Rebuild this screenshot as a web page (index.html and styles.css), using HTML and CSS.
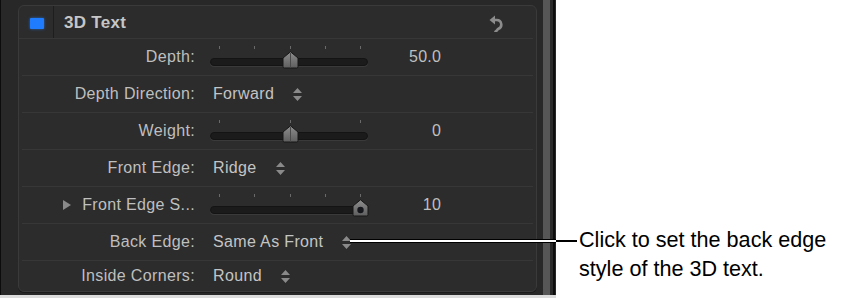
FILE: index.html
```html
<!DOCTYPE html>
<html>
<head>
<meta charset="utf-8">
<link rel="stylesheet" href="styles.css">
</head>
<body>
<div class="page">
  <div class="app">
    <div class="gutter"></div>
    <div class="panel">
      <div class="header">
        <div class="swatch-cell"><span class="swatch"></span></div>
        <div class="title">3D Text</div>
        <svg class="reset" width="14" height="17" viewBox="0 0 14 17">
          <path d="M0.5 5 L6 0.5 L6 9.5 Z" fill="#8c8c8c"/>
          <path d="M5 5 H7.5 A4.6 4.6 0 0 1 9 14 Q8 15.6 6.5 16.5" fill="none" stroke="#8c8c8c" stroke-width="2.6" stroke-linecap="round"/>
        </svg>
      </div>

      <div class="row">
        <div class="label">Depth:</div>
        <div class="slider">
          <div class="ticks"><i></i><i></i><i></i><i></i><i></i></div>
          <div class="track"></div>
          <svg class="thumb" style="left:72px" width="17" height="18" viewBox="0 0 17 18"><defs><linearGradient id="g1" x1="0" y1="0" x2="0" y2="1"><stop offset="0" stop-color="#8e8e8e"/><stop offset="1" stop-color="#5e5e5e"/></linearGradient></defs><path d="M8.5 0.8 L16 7 V15.5 Q16 17 14.5 17 H2.5 Q1 17 1 15.5 V7 Z" fill="url(#g1)" stroke="#161616" stroke-width="1"/><line x1="8.5" y1="2" x2="8.5" y2="16.5" stroke="#4a4a4a" stroke-width="1"/></svg>
        </div>
        <div class="value">50.0</div>
      </div>

      <div class="row">
        <div class="label">Depth Direction:</div>
        <div class="popup"><span>Forward</span><svg class="stepper" width="9" height="13" viewBox="0 0 9 13"><path d="M4.5 0 L9 5 H0 Z M0 8 H9 L4.5 13 Z" fill="#8a8a8a"/></svg></div>
      </div>

      <div class="row">
        <div class="label">Weight:</div>
        <div class="slider">
          <div class="ticks three"><i></i><i></i><i></i></div>
          <div class="track"></div>
          <svg class="thumb" style="left:72px" width="17" height="18" viewBox="0 0 17 18"><defs><linearGradient id="g2" x1="0" y1="0" x2="0" y2="1"><stop offset="0" stop-color="#8e8e8e"/><stop offset="1" stop-color="#5e5e5e"/></linearGradient></defs><path d="M8.5 0.8 L16 7 V15.5 Q16 17 14.5 17 H2.5 Q1 17 1 15.5 V7 Z" fill="url(#g2)" stroke="#161616" stroke-width="1"/><line x1="8.5" y1="2" x2="8.5" y2="16.5" stroke="#4a4a4a" stroke-width="1"/></svg>
        </div>
        <div class="value">0</div>
      </div>

      <div class="row">
        <div class="label">Front Edge:</div>
        <div class="popup"><span>Ridge</span><svg class="stepper" width="9" height="13" viewBox="0 0 9 13"><path d="M4.5 0 L9 5 H0 Z M0 8 H9 L4.5 13 Z" fill="#8a8a8a"/></svg></div>
      </div>

      <div class="row">
        <div class="label"><span class="disclosure"></span>Front Edge S...</div>
        <div class="slider">
          <div class="ticks"><i></i><i></i><i></i><i></i><i></i></div>
          <div class="track"></div>
          <svg class="thumb" style="left:142px" width="17" height="18" viewBox="0 0 17 18"><defs><linearGradient id="g3" x1="0" y1="0" x2="0" y2="1"><stop offset="0" stop-color="#8e8e8e"/><stop offset="1" stop-color="#5e5e5e"/></linearGradient></defs><path d="M8.5 0.8 L16 7 V15.5 Q16 17 14.5 17 H2.5 Q1 17 1 15.5 V7 Z" fill="url(#g3)" stroke="#161616" stroke-width="1"/><circle cx="8.5" cy="11" r="3.2" fill="#15171c"/></svg>
        </div>
        <div class="value">10</div>
      </div>

      <div class="row">
        <div class="label">Back Edge:</div>
        <div class="popup"><span>Same As Front</span><svg class="stepper" width="9" height="13" viewBox="0 0 9 13"><path d="M4.5 0 L9 5 H0 Z M0 8 H9 L4.5 13 Z" fill="#8a8a8a"/></svg></div>
      </div>

      <div class="row last">
        <div class="label">Inside Corners:</div>
        <div class="popup"><span>Round</span><svg class="stepper" width="9" height="13" viewBox="0 0 9 13"><path d="M4.5 0 L9 5 H0 Z M0 8 H9 L4.5 13 Z" fill="#8a8a8a"/></svg></div>
      </div>
    </div>
    <div class="edge">
      <div class="edge-gap"></div>
      <div class="edge-stripe"></div>
      <div class="edge-dark"></div>
      <div class="edge-black"></div>
    </div>
  </div>
  <div class="canvas"></div>
  <div class="callout-line"></div>
  <div class="callout-line-tail"></div>
  <div class="callout-text">Click to set the back edge<br>style of the 3D text.</div>
</div>
</body>
</html>
```

FILE: styles.css
```css
* { box-sizing: border-box; }
html, body { margin: 0; padding: 0; }
body {
  width: 842px;
  height: 298px;
  overflow: hidden;
  background: #ffffff;
  font-family: "Liberation Sans", Arial, sans-serif;
}
.page {
  position: relative;
  display: flex;
  width: 842px;
  height: 298px;
}
.app {
  display: flex;
  width: 556px;
  height: 295px;
  background: #282828;
  border-left: 1px solid #0c0c0c;
}
.gutter { width: 17px; flex: none; }
.panel {
  width: 519px;
  height: 287px;
  margin-top: 5px;
  flex: none;
  background: #2c2c2c;
  border: 1px solid #3a3a3a;
  border-radius: 6px;
  display: flex;
  flex-direction: column;
  box-shadow: 0 1px 0 #1b1b1b;
}
.header {
  height: 33px;
  flex: none;
  margin: 0 3px 0 0;
  display: flex;
  align-items: center;
  border-bottom: 1px solid #373737;
}
.swatch-cell {
  width: 35px;
  height: 100%;
  border-right: 1px solid #1e1e1e;
  display: flex;
  align-items: center;
  justify-content: center;
  padding-top: 2px;
}
.swatch {
  display: block;
  width: 14px;
  height: 11px;
  background: #1f7cff;
  border-radius: 1px;
  box-shadow: 0 0 3px rgba(40, 130, 255, 0.7);
  margin-left: 1px;
}
.title {
  margin-left: 10px;
  padding-top: 1px;
  font-size: 17px;
  font-weight: bold;
  color: #c6c6c6;
  letter-spacing: 0.3px;
  flex: 1;
}
.reset { margin-right: 30px; margin-top: 2px; }
.row {
  height: 37px;
  flex: none;
  margin: 0 3px;
  border-bottom: 1px solid #373737;
  display: flex;
  align-items: center;
}
.row.last { border-bottom: none; flex: 1; }
.label {
  width: 173px;
  flex: none;
  text-align: right;
  font-size: 16px;
  letter-spacing: 0.35px;
  color: #bfbfbf;
  display: flex;
  align-items: center;
  justify-content: flex-end;
}
.disclosure {
  width: 0;
  height: 0;
  border-top: 5px solid transparent;
  border-bottom: 5px solid transparent;
  border-left: 8px solid #8a8a8a;
  margin-right: 11px;
}
.popup {
  margin-left: 18px;
  display: flex;
  align-items: center;
  font-size: 16px;
  letter-spacing: 0.35px;
  color: #c4c4c4;
}
.stepper { margin-left: 19px; }
.slider {
  position: relative;
  margin-left: 15px;
  width: 158px;
  height: 37px;
  flex: none;
}
.ticks {
  position: absolute;
  left: 9px;
  right: 7px;
  top: 7px;
  height: 3px;
  display: flex;
  justify-content: space-between;
}
.ticks i {
  display: block;
  width: 1px;
  height: 3px;
  background: #6a6a6a;
}
.track {
  position: absolute;
  left: 0;
  right: 0;
  top: 19px;
  height: 8px;
  border-radius: 4px;
  background: #1b1b1b;
  border: 1px solid #141414;
  box-shadow: 0 1px 0 #3a3a3a;
}
.thumb { position: absolute; top: 12px; }
.value {
  width: 73px;
  text-align: right;
  font-size: 16px;
  letter-spacing: 0.2px;
  color: #bfbfbf;
}
.edge { display: flex; flex: none; height: 295px; }
.edge-gap { width: 6px; }
.edge-stripe { width: 7px; background: #565656; }
.edge-dark { width: 3px; background: #2b2b2b; }
.edge-black { width: 2px; background: #0e0e0e; }
.canvas {
  position: absolute;
  left: 0;
  top: 295px;
  width: 556px;
  height: 3px;
  background: #dcdcdc;
}
.callout-line {
  position: absolute;
  left: 350px;
  top: 239px;
  width: 206px;
  height: 4px;
  background: #ffffff;
  border-top: 1px solid #000;
  border-bottom: 1px solid #000;
}
.callout-line-tail {
  position: absolute;
  left: 556px;
  top: 240px;
  width: 21px;
  height: 2px;
  background: #000;
}
.callout-text {
  position: absolute;
  left: 579px;
  top: 225px;
  font-size: 21.6px;
  line-height: 29px;
  color: #000;
}
```
